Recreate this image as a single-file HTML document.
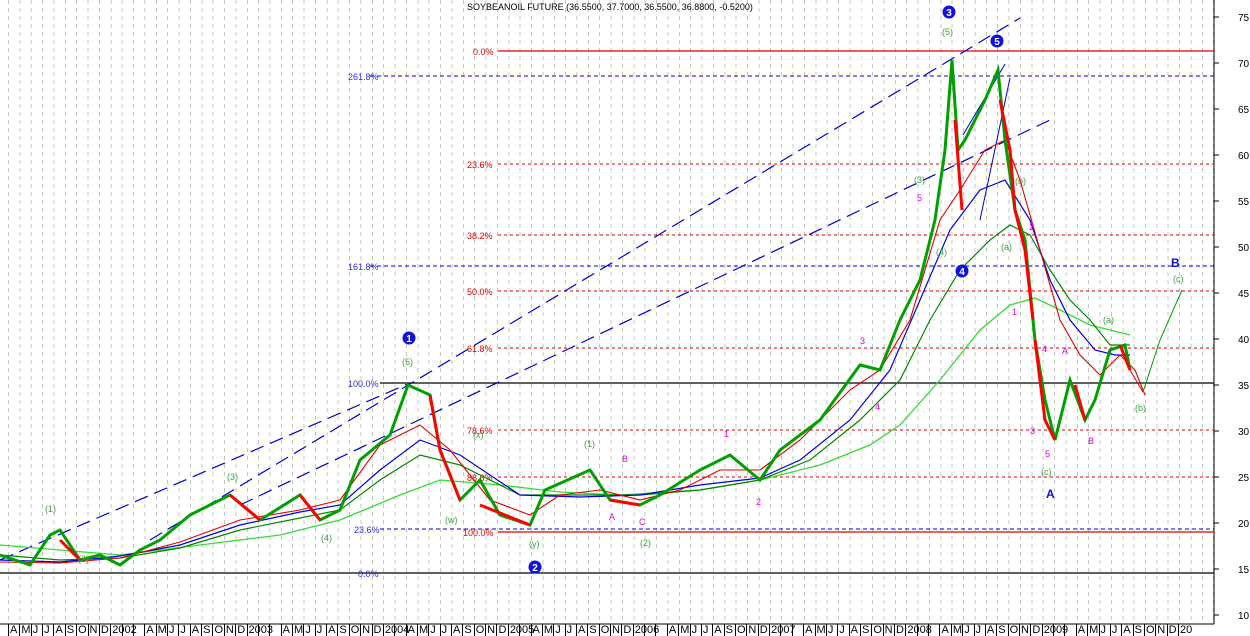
<!DOCTYPE html>
<html><head><meta charset="utf-8"><style>
html,body{margin:0;padding:0;background:#fff;width:1250px;height:636px;overflow:hidden;font-family:"Liberation Sans",sans-serif}
#grid{position:absolute;left:0;top:0;width:1214px;height:624px;background:repeating-linear-gradient(to bottom,transparent 0 4px,#fff 4px 8px),repeating-linear-gradient(to right,transparent 0 8px,#c4c4c4 8px 9px,transparent 9px 11.37px)}
#months{position:absolute;left:8px;top:624px;height:12px;display:flex;font-size:11px;line-height:12px;color:#000}
#months span{width:11.37px;flex:none;border-left:1px solid #000;box-sizing:border-box;padding-left:1px;overflow:visible;white-space:nowrap}
</style></head><body>
<div id="grid"></div>
<svg width="1250" height="636" style="position:absolute;left:0;top:0" font-family="Liberation Sans, sans-serif">
<line x1="1214" y1="0" x2="1214" y2="624" stroke="#000"/>
<line x1="0" y1="624" x2="1214" y2="624" stroke="#000"/>
<g stroke="#000">
<line x1="1214" y1="17" x2="1219" y2="17"/><line x1="1214" y1="63" x2="1219" y2="63"/><line x1="1214" y1="109" x2="1219" y2="109"/><line x1="1214" y1="155" x2="1219" y2="155"/><line x1="1214" y1="201" x2="1219" y2="201"/><line x1="1214" y1="247" x2="1219" y2="247"/><line x1="1214" y1="293" x2="1219" y2="293"/><line x1="1214" y1="339" x2="1219" y2="339"/><line x1="1214" y1="385" x2="1219" y2="385"/><line x1="1214" y1="431" x2="1219" y2="431"/><line x1="1214" y1="477" x2="1219" y2="477"/><line x1="1214" y1="523" x2="1219" y2="523"/><line x1="1214" y1="569" x2="1219" y2="569"/><line x1="1214" y1="615" x2="1219" y2="615"/>
</g>
<g font-size="10" fill="#000">
<text x="1238" y="21">75</text><text x="1238" y="67">70</text><text x="1238" y="113">65</text><text x="1238" y="159">60</text><text x="1238" y="205">55</text><text x="1238" y="251">50</text><text x="1238" y="297">45</text><text x="1238" y="343">40</text><text x="1238" y="389">35</text><text x="1238" y="435">30</text><text x="1238" y="481">25</text><text x="1238" y="527">20</text><text x="1238" y="573">15</text><text x="1238" y="619">10</text>
</g>
<text x="467" y="10" font-size="9" fill="#000">SOYBEANOIL FUTURE (36.5500, 37.7000, 36.5500, 36.8800, -0.5200)</text>
<line x1="498" y1="51" x2="1214" y2="51" stroke="#e00000" stroke-width="1.3"/>
<line x1="370" y1="76" x2="1214" y2="76" stroke="#0000e0" stroke-dasharray="4,3"/>
<line x1="498" y1="164" x2="1214" y2="164" stroke="#e00000" stroke-dasharray="3,3"/>
<line x1="498" y1="235" x2="1214" y2="235" stroke="#e00000" stroke-dasharray="3,3"/>
<line x1="370" y1="266" x2="1214" y2="266" stroke="#0000e0" stroke-dasharray="4,3"/>
<line x1="498" y1="291" x2="1214" y2="291" stroke="#e00000" stroke-dasharray="3,3"/>
<line x1="498" y1="348" x2="1214" y2="348" stroke="#e00000" stroke-dasharray="3,3"/>
<line x1="380" y1="383" x2="1214" y2="383" stroke="#000" stroke-width="1.2"/>
<line x1="498" y1="430" x2="1214" y2="430" stroke="#e00000" stroke-dasharray="3,3"/>
<line x1="498" y1="477" x2="1214" y2="477" stroke="#e00000" stroke-dasharray="3,3"/>
<line x1="380" y1="529" x2="1214" y2="529" stroke="#0000e0" stroke-dasharray="4,3"/>
<line x1="498" y1="532" x2="1214" y2="532" stroke="#e00000" stroke-width="1.3"/>
<line x1="0" y1="573" x2="1214" y2="573" stroke="#000" stroke-width="1.2"/>
<g font-size="9">
<text x="473" y="55" fill="#e00000">0.0%</text>
<text x="348" y="80" fill="#3030d0">261.8%</text>
<text x="467" y="168" fill="#e00000">23.6%</text>
<text x="467" y="239" fill="#e00000">38.2%</text>
<text x="348" y="270" fill="#3030d0">161.8%</text>
<text x="467" y="295" fill="#e00000">50.0%</text>
<text x="467" y="352" fill="#e00000">61.8%</text>
<text x="348" y="387" fill="#3030d0">100.0%</text>
<text x="467" y="434" fill="#e00000">78.6%</text>
<text x="467" y="481" fill="#e00000">88.6%</text>
<text x="354" y="533" fill="#3030d0">23.6%</text>
<text x="463" y="536" fill="#e00000">100.0%</text>
<text x="358" y="577" fill="#3030d0">0.0%</text>
</g>
<g stroke="#0000d0" stroke-width="1.2" fill="none" stroke-dasharray="14,7">
<line x1="0" y1="560" x2="410" y2="383"/>
<line x1="150" y1="540" x2="1020" y2="18"/>
<line x1="240" y1="505" x2="1050" y2="120"/>
</g>
<g stroke="#0000d0" stroke-width="1" fill="none">
<line x1="963" y1="135" x2="1005" y2="64"/>
<line x1="1010" y1="78" x2="980" y2="220"/>
</g>
<polyline fill="none" stroke="#33dd33" stroke-width="1.3" points="0,545 60,550 120,555 200,545 280,535 340,520 400,495 440,480 500,485 560,492 620,495 700,490 760,480 820,465 870,445 900,425 940,380 980,330 1010,305 1035,298 1060,310 1090,325 1110,330 1130,335"/>
<polyline fill="none" stroke="#008800" stroke-width="1.2" points="0,555 60,560 120,558 180,548 240,530 300,518 340,510 380,480 420,455 460,465 520,495 580,495 640,495 700,490 760,480 810,460 860,420 900,380 930,320 960,270 990,240 1010,225 1030,235 1050,270 1070,300 1090,320 1110,345 1130,345"/>
<polyline fill="none" stroke="#0000e0" stroke-width="1.2" points="0,560 60,562 120,556 180,545 240,525 300,512 340,505 380,470 420,440 460,455 520,495 580,497 640,495 700,485 760,478 800,460 850,420 890,370 920,300 950,230 980,190 1005,180 1030,220 1050,280 1070,320 1095,350 1115,355 1130,355"/>
<polyline fill="none" stroke="#e00000" stroke-width="1.1" points="0,562 60,563 120,558 180,542 240,520 300,510 340,500 380,445 420,425 450,450 490,500 530,515 560,495 600,490 640,500 680,490 720,470 760,470 800,440 850,390 880,370 910,320 940,220 960,190 985,150 1005,140 1020,180 1040,250 1060,320 1080,355 1100,375 1120,355 1135,370 1145,395"/>
<polyline fill="none" stroke="#00a000" stroke-width="3" points="0,555 30,565 50,535 60,530 80,560 100,555 120,565 140,550 160,540 190,515 230,495 260,520 300,495 320,520 340,510 360,460 390,435 408,385 430,395 440,450 460,500 480,480 500,515 530,525 545,490 590,470 610,500 640,505 660,495 700,470 730,455 760,480 780,450 820,420 860,365 880,370 900,320 920,280 935,220 945,150 952,60 958,150 965,140 975,120 985,100 998,70 1005,140 1015,210 1025,240 1035,340 1045,400 1055,440 1070,380 1085,420 1095,400 1110,350 1125,345 1130,370"/>
<g stroke="#ff0000" stroke-width="3" fill="none">
<polyline points="60,540 80,560"/><polyline points="230,495 260,520"/><polyline points="300,495 320,520"/><polyline points="430,395 440,450 460,500"/><polyline points="480,505 530,525"/><polyline points="610,500 640,505"/><polyline points="955,120 962,210"/><polyline points="1000,100 1010,150 1015,210 1025,250 1033,320"/><polyline points="1035,340 1045,420 1055,440"/><polyline points="1075,385 1085,420"/><polyline points="1120,345 1130,370"/>
</g>
<polyline fill="none" stroke="#00a000" stroke-width="1" points="1143,392 1160,340 1182,290"/>
<polyline fill="none" stroke="#e00000" stroke-width="1" points="1130,370 1143,392"/>
<g font-size="9" fill="#40a040">
<text x="45" y="512">(1)</text><text x="78" y="562">(2)</text><text x="227" y="480">(3)</text><text x="321" y="541">(4)</text><text x="402" y="365">(5)</text>
<text x="445" y="523">(w)</text><text x="473" y="438">(x)</text><text x="529" y="547">(y)</text><text x="584" y="447">(1)</text><text x="640" y="546">(2)</text>
<text x="914" y="183">(3)</text><text x="936" y="255">(4)</text><text x="942" y="35">(5)</text><text x="1001" y="250">(a)</text><text x="1015" y="184">(b)</text><text x="1041" y="475">(c)</text><text x="1103" y="323">(a)</text><text x="1135" y="411">(b)</text><text x="1173" y="282">(c)</text>
</g>
<g font-size="9" fill="#e000e0">
<text x="609" y="520">A</text><text x="622" y="462">B</text><text x="639" y="525">C</text><text x="724" y="437">1</text><text x="756" y="505">2</text><text x="860" y="344">3</text><text x="875" y="410">4</text><text x="917" y="201">5</text><text x="1012" y="315">1</text><text x="1029" y="230">2</text><text x="1030" y="434">3</text><text x="1042" y="352">4</text><text x="1045" y="457">5</text><text x="1062" y="354">A</text><text x="1088" y="444">B</text>
</g>
<g font-size="12" font-weight="bold" fill="#1010d0"><text x="1046" y="498">A</text><text x="1171" y="267">B</text></g>
<g font-size="10" font-weight="bold" fill="#fff" text-anchor="middle">
<circle cx="409" cy="338" r="6.5" fill="#1010e0"/><text x="409" y="342">1</text>
<circle cx="535" cy="567" r="6.5" fill="#1010e0"/><text x="535" y="571">2</text>
<circle cx="949" cy="12" r="6.5" fill="#1010e0"/><text x="949" y="16">3</text>
<circle cx="962" cy="271" r="6.5" fill="#1010e0"/><text x="962" y="275">4</text>
<circle cx="997" cy="41" r="6.5" fill="#1010e0"/><text x="997" y="45">5</text>
</g>
</svg>
<div id="months"><span>A</span><span>M</span><span>J</span><span>J</span><span>A</span><span>S</span><span>O</span><span>N</span><span>D</span><span>2002</span><span></span><span></span><span>A</span><span>M</span><span>J</span><span>J</span><span>A</span><span>S</span><span>O</span><span>N</span><span>D</span><span>2003</span><span></span><span></span><span>A</span><span>M</span><span>J</span><span>J</span><span>A</span><span>S</span><span>O</span><span>N</span><span>D</span><span>2004</span><span></span><span>A</span><span>M</span><span>J</span><span>J</span><span>A</span><span>S</span><span>O</span><span>N</span><span>D</span><span>2005</span><span></span><span>A</span><span>M</span><span>J</span><span>J</span><span>A</span><span>S</span><span>O</span><span>N</span><span>D</span><span>2006</span><span></span><span></span><span>A</span><span>M</span><span>J</span><span>J</span><span>A</span><span>S</span><span>O</span><span>N</span><span>D</span><span>2007</span><span></span><span></span><span>A</span><span>M</span><span>J</span><span>J</span><span>A</span><span>S</span><span>O</span><span>N</span><span>D</span><span>2008</span><span></span><span></span><span>A</span><span>M</span><span>J</span><span>J</span><span>A</span><span>S</span><span>O</span><span>N</span><span>D</span><span>2009</span><span></span><span></span><span>A</span><span>M</span><span>J</span><span>J</span><span>A</span><span>S</span><span>O</span><span>N</span><span>D</span><span>20</span></div>
</body></html>
